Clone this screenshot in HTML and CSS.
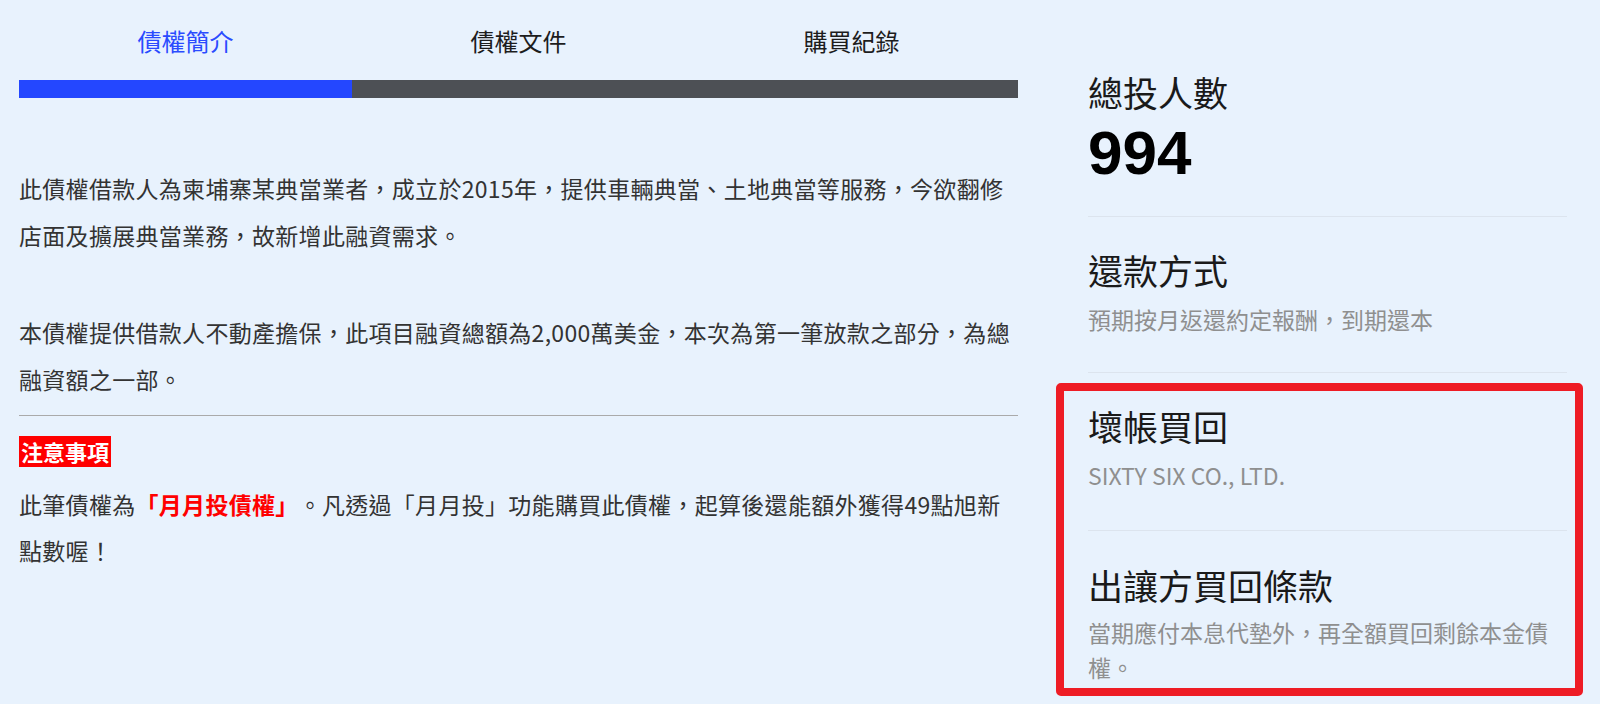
FILE: index.html
```html
<!DOCTYPE html>
<html lang="zh-Hant">
<head>
  <meta charset="UTF-8" />
  <meta name="viewport" content="width=device-width, initial-scale=1.0"/>
  <title>債權簡介</title>
  <link rel="stylesheet" href="styles.css">
</head>
<body>
<div class="page">
  <div class="main">
    <div class="tabs">
      <div class="tab active">債權簡介</div>
      <div class="tab">債權文件</div>
      <div class="tab">購買紀錄</div>
    </div>
    <div class="tab-bar"><div class="tab-bar-fill"></div></div>

    <div class="content">
      <p class="intro">此債權借款人為柬埔寨某典當業者，成立於2015年，提供車輛典當、土地典當等服務，今欲翻修店面及擴展典當業務，故新增此融資需求。</p>
      <p class="intro">本債權提供借款人不動產擔保，此項目融資總額為2,000萬美金，本次為第一筆放款之部分，為總融資額之一部。</p>
      <hr class="divider">
      <span class="notice-tag">注意事項</span>
      <p class="notice-text">此筆債權為<strong class="hot">「月月投債權」</strong>。凡透過「月月投」功能購買此債權，起算後還能額外獲得49點旭新點數喔！</p>
    </div>
  </div>

  <div class="side">
    <div class="info-item">
      <div class="info-title">總投人數</div>
      <div class="info-number">994</div>
    </div>
    <div class="info-item">
      <div class="info-title">還款方式</div>
      <div class="info-desc">預期按月返還約定報酬，到期還本</div>
    </div>
    <div class="highlight">
      <div class="info-item">
        <div class="info-title">壞帳買回</div>
        <div class="info-desc">SIXTY SIX CO., LTD.</div>
      </div>
      <div class="info-item">
        <div class="info-title">出讓方買回條款</div>
        <div class="info-desc">當期應付本息代墊外，再全額買回剩餘本金債權。</div>
      </div>
    </div>
  </div>
</div>
</body>
</html>
```

FILE: styles.css
```css
body {
  margin: 0;
  background-color: #e8f2fd;
  font-family: "Noto Sans CJK TC", "Noto Sans CJK SC", sans-serif;
  color: #333;
  text-spacing-trim: space-all;
}
.page {
  display: flex;
  align-items: flex-start;
  padding-left: 19px;
}
.main {
  width: 999px;
}
.tabs {
  display: flex;
  height: 80px;
}
.tab {
  flex: 1;
  display: flex;
  align-items: center;
  justify-content: center;
  font-size: 24px;
  color: #1d1d1d;
}
.tab.active {
  color: #2a4bff;
}
.tab-bar {
  display: flex;
  height: 18px;
  background-color: #4d5055;
}
.tab-bar-fill {
  width: 333px;
  background-color: #2447ff;
}
.content {
  padding-top: 67px;
}
.intro {
  margin: 0 0 50px;
  font-size: 23px;
  letter-spacing: .3px;
  line-height: 47px;
}
.intro + .divider {
  margin-top: -38px;
}
.divider {
  border: none;
  border-top: 1px solid #aaa;
  margin: 0;
}
.notice-tag {
  display: inline-block;
  margin-top: 20px;
  padding: 0 2px;
  background-color: #f00;
  color: #fff;
  font-size: 22px;
  font-weight: bold;
  line-height: 31px;
}
.notice-text {
  margin: 14px 0 0;
  font-size: 23px;
  letter-spacing: .3px;
  line-height: 46px;
}
.hot {
  color: #f00;
}
.side {
  width: 527px;
  margin-left: 38px;
  padding-top: 70px;
}
.info-item {
  margin: 0 16px 0 32px;
  padding: 31px 0 35px;
  border-bottom: 1px solid #dce4ee;
}
.side > .info-item:first-child {
  padding-top: 0;
  padding-bottom: 33px;
}
.info-title {
  font-size: 35px;
  line-height: 44px;
  color: #1a1a1a;
}
.info-number {
  margin-top: 9px;
  font-family: "Liberation Sans", Arial, sans-serif;
  font-size: 62px;
  font-weight: bold;
  line-height: 60px;
  color: #000;
}
.info-desc {
  margin-top: 10px;
  font-size: 23px;
  line-height: 35px;
  color: #8f8f8f;
}
.highlight {
  margin-top: 10px;
  border: 8px solid #ee1c25;
  border-radius: 5px;
}
.highlight .info-item {
  margin: 0 8px 0 24px;
}
.highlight .info-item:first-child {
  padding-top: 13px;
  padding-bottom: 37px;
}
.highlight .info-item:first-child .info-desc {
  margin-top: 10px;
}
.highlight .info-item:last-child {
  padding-top: 32px;
  padding-bottom: 3px;
  border-bottom: none;
}
.highlight .info-item:last-child .info-desc {
  margin-top: 8px;
}
```
